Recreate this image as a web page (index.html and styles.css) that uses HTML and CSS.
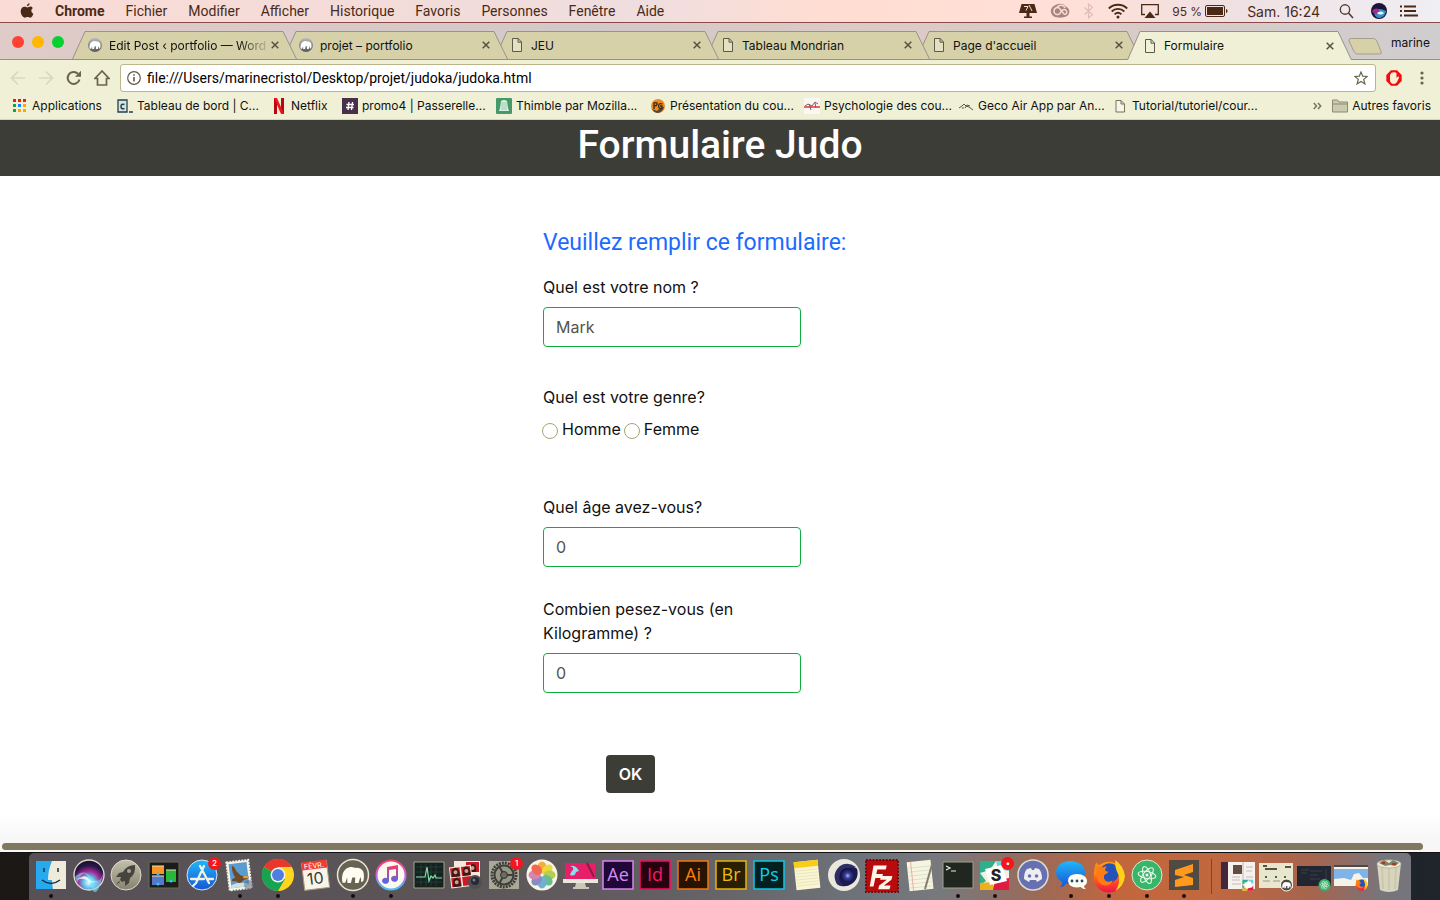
FILE: index.html
```html
<!DOCTYPE html>
<html lang="fr">
<head>
<meta charset="utf-8">
<title>Formulaire</title>
<link rel="stylesheet" href="styles.css">
</head>
<body>
<svg class="defs" aria-hidden="true">
  <defs>
    <symbol id="file" viewBox="0 0 10 14"><path d="M.5.5h5.700l3.300 3.500v9.500h-9zM6 .5v3.700h3.500" fill="#f2f1dc" fill-opacity=".5" stroke="#5c5a48"/></symbol>
    <symbol id="close" viewBox="0 0 8 8"><path d="M.7.7l6.600 6.600M7.300.7L.7 7.300" stroke="#55533f" stroke-width="1.500" fill="none"/></symbol>
    <symbol id="elephant" viewBox="2 2 20 20"><path d="M4.500 17.500c-1-5 .5-10 5-11 2.500-.6 3.500.6 5 .4 3.600-.2 5.500 2.400 5.300 6 0 2-.2 3.600-1.300 4-.8.2-1-.5-.6-1.500l-.7-1.900-1.200 4.300h-2.600l.2-4h-2.100l-1 4H8l-.2-4-1.300 3.700z"/></symbol>
    <symbol id="tabshape" viewBox="0 0 225 29" preserveAspectRatio="none"><path d="M.5 29L13 .5H211L224.500 29" stroke="#96918a"/></symbol>
    <symbol id="atom" viewBox="0 0 24 24"><g fill="none" stroke="#e8f7e8" stroke-width="1.100"><ellipse cx="12" cy="12" rx="9" ry="3.500" transform="rotate(10 12 12)"/><ellipse cx="12" cy="12" rx="9" ry="3.500" transform="rotate(70 12 12)"/><ellipse cx="12" cy="12" rx="9" ry="3.500" transform="rotate(130 12 12)"/></g><circle cx="12" cy="12" r="1.500" fill="#fff"/></symbol>
    <linearGradient id="grey" x2="0" y2="1"><stop stop-color="#b9b9b9"/><stop offset="1" stop-color="#595959"/></linearGradient>
    <linearGradient id="sky" x2="0" y2="1"><stop stop-color="#21b7f7"/><stop offset="1" stop-color="#1556d8"/></linearGradient>
    <linearGradient id="stone" x2="0" y2="1"><stop stop-color="#c3c1ae"/><stop offset="1" stop-color="#85836f"/></linearGradient>
    <linearGradient id="tunes" x2="0" y2="1"><stop stop-color="#fb3a68"/><stop offset=".5" stop-color="#c861e8"/><stop offset="1" stop-color="#46c4f8"/></linearGradient>
    <linearGradient id="note" x2="0" y2="1"><stop stop-color="#fb3a68"/><stop offset="1" stop-color="#4a6bf0"/></linearGradient>
    <linearGradient id="fox" x2="0" y2="1"><stop stop-color="#ff9a16"/><stop offset=".5" stop-color="#ff6a12"/><stop offset="1" stop-color="#f3104c"/></linearGradient>
    <radialGradient id="siri" cx=".5" cy=".75" r=".75"><stop stop-color="#eaffff"/><stop offset=".25" stop-color="#5cc6ee"/><stop offset=".5" stop-color="#a22a95"/><stop offset=".75" stop-color="#2a1749"/><stop offset="1" stop-color="#11102b"/></radialGradient>
    <radialGradient id="orb" cx=".55" cy=".55" r=".5"><stop stop-color="#aab4f0"/><stop offset=".4" stop-color="#3a3d9a"/><stop offset="1" stop-color="#10123c"/></radialGradient>
    <symbol id="firefox" viewBox="0 0 32 32"><circle cx="16" cy="17" r="14.500" fill="url(#fox)"/><path d="M2 15Q2 7 4 3q2 3 5 4l-3 9z" fill="#ff8a14"/><circle cx="16.500" cy="13" r="9" fill="#2452b8"/><path d="M4 8q3-2 6 0 1-1 4-1-2 2-1.500 4 2 1 3 1-1 2-4 3-1 4 2 6 3 1 6-1-2 5-7 5Q3 24 4 8z" fill="#ff7c14"/><path d="M22 1q8 6 9 15-1 10-9 14 5-7 3-15-4-7-3-14z" fill="#ffd21a"/></symbol>
    <symbol id="slack" viewBox="0 0 32 32"><rect x="1" y="2" width="29" height="29" fill="#f3f1e4"/><path d="M1 2h16l-6 9L1 14z" fill="#2eb08a"/><path d="M17 2h13v10l-11-2z" fill="#6dd0df"/><path d="M1 14l6 8-6 4z" fill="#2eb08a"/><path d="M1 24l11-1 6 8H1z" fill="#ecb120"/><path d="M16 22l14-3v12H14z" fill="#e01b40"/><path d="M6 10l17-4 5 16-17 4z" fill="#fff"/></symbol>
  </defs>
</svg>

<header class="menubar">
  <nav class="menus" aria-label="Menus">
    <svg class="apple" viewBox="0 0 14 16"><path d="M9.600.2c.1 1.600-1.200 3-2.700 3C6.700 1.700 8.200.3 9.600.2zM12.800 5.300c-2.200 1.400-1.700 4.500.6 5.400-.5 1.700-1.900 4-3.200 4-1 0-1.500-.6-2.700-.6s-1.700.6-2.600.6C3 14.700.7 11.600.7 8.300c0-2.900 1.800-4.600 3.800-4.600 1.200 0 2 .7 2.900.7.800 0 1.800-.8 3.200-.8.900 0 1.700.6 2.200 1.700z" fill="#4a2a16"/></svg>
    <button class="app">Chrome</button><button>Fichier</button><button>Modifier</button><button>Afficher</button><button>Historique</button><button>Favoris</button><button>Personnes</button><button>Fenêtre</button><button>Aide</button>
  </nav>
  <div class="status">
    <svg width="18" height="16" viewBox="0 0 18 16"><path d="M2.500 1h13L18 10H0zM7.500 10h3v3.500H13V15H5v-1.500h2.500z" fill="#4a2a16"/><path d="M5 3.500h4l-2 4M10 2l3 6" stroke="#f8dcd4" fill="none"/></svg>
    <svg width="20" height="16" viewBox="0 0 20 16"><path d="M6 1.700c4-2 8-1 10 2 4 1 4.500 7 1 9.300-3 2-9 2-12 1C-.5 12-1 4 6 1.700z" fill="#aa8580"/><g fill="none" stroke="#f8ded8" stroke-width="1.400"><path d="M10 10.500c-2 2-6 1-6-2.500s4.500-4.500 6-2l4 5c2 1 3.500-1 2.500-3s-3.500-2-5 0l-2 3M7 4c3-3 7-2 8 1"/></g></svg>
    <svg width="12" height="16" viewBox="0 0 12 16"><path d="M1.500 4.500l8 7-4 3.500V1l4 3.500-8 7" fill="none" stroke="#dfbdb8" stroke-width="1.200"/></svg>
    <svg width="20" height="16" viewBox="0 0 20 16"><g fill="none" stroke="#4a2a16" stroke-width="1.800"><path d="M.8 5.500c5-5 13.400-5 18.400 0M3.700 8.500c3.500-3.500 9.100-3.500 12.600 0M6.600 11.400c2-1.900 4.800-1.900 6.800 0"/></g><circle cx="10" cy="14" r="1.500" fill="#4a2a16"/></svg>
    <svg width="18" height="16" viewBox="0 0 18 16"><path d="M4 11.500H.7V1.700h16.600v9.800H14" fill="none" stroke="#4a2a16" stroke-width="1.300"/><path d="M9 8.500l5.500 6.500h-11z" fill="#4a2a16"/></svg>
    <span class="battery">95 %<svg width="23" height="12" viewBox="0 0 23 12"><rect x=".5" y=".5" width="19" height="11" rx="1.500" fill="none" stroke="#4a2a16"/><path d="M2 2h16v8H2zM21 4c2 .5 2 3.500 0 4z" fill="#4a2a16"/></svg></span>
    <span class="clock">Sam. 16:24</span>
    <svg class="search" width="15" height="16" viewBox="0 0 15 16"><circle cx="6" cy="6.500" r="4.700" fill="none" stroke="#5a4034" stroke-width="1.400"/><path d="M9.500 10l4.500 5" stroke="#5a4034" stroke-width="1.700"/></svg>
    <svg width="16" height="16" viewBox="0 0 16 16"><circle cx="8" cy="8" r="8" fill="#1b1538"/><path d="M3 8c3-3 8-2 12 0-1 5-4 7-7 7-3 0-5-3-5-7z" fill="#3b8fc8"/><path d="M1 8c3-4 7-3 8 1-3 3-5 3-8-1z" fill="#a22b95"/><path d="M6 10c3-2 5-2 7 0-2 2-5 2-7 0z" fill="#d8ffff"/></svg>
    <svg width="18" height="14" viewBox="0 0 18 14"><path d="M0 2.500h2M4 2.500h12M0 7h2M4 7h12M0 11.500h2M4 11.500h14" stroke="#4a2a16" stroke-width="2"/></svg>
  </div>
</header>

<div class="window">
  <div class="tabstrip">
    <div class="lights"><button class="red" aria-label="Fermer"></button><button class="yellow" aria-label="Réduire"></button><button class="green" aria-label="Agrandir"></button></div>
    <div class="tabs">
      <div class="tab"><svg class="shape"><use href="#tabshape"/></svg><svg class="fav" viewBox="0 0 24 24"><circle cx="12" cy="12" r="12" fill="url(#grey)"/><use href="#elephant" fill="#fff"/></svg><a href="#" class="fade">Edit Post ‹ portfolio — Word</a><button aria-label="Fermer l’onglet"><svg><use href="#close"/></svg></button></div>
      <div class="tab"><svg class="shape"><use href="#tabshape"/></svg><svg class="fav" viewBox="0 0 24 24"><circle cx="12" cy="12" r="12" fill="url(#grey)"/><use href="#elephant" fill="#fff"/></svg><a href="#">projet – portfolio</a><button aria-label="Fermer l’onglet"><svg><use href="#close"/></svg></button></div>
      <div class="tab"><svg class="shape"><use href="#tabshape"/></svg><svg class="fav"><use href="#file"/></svg><a href="#">JEU</a><button aria-label="Fermer l’onglet"><svg><use href="#close"/></svg></button></div>
      <div class="tab"><svg class="shape"><use href="#tabshape"/></svg><svg class="fav"><use href="#file"/></svg><a href="#">Tableau Mondrian</a><button aria-label="Fermer l’onglet"><svg><use href="#close"/></svg></button></div>
      <div class="tab"><svg class="shape"><use href="#tabshape"/></svg><svg class="fav"><use href="#file"/></svg><a href="#">Page d'accueil</a><button aria-label="Fermer l’onglet"><svg><use href="#close"/></svg></button></div>
      <div class="tab active"><svg class="shape"><use href="#tabshape"/></svg><svg class="fav"><use href="#file"/></svg><a href="#">Formulaire</a><button aria-label="Fermer l’onglet"><svg><use href="#close"/></svg></button></div>
    </div>
    <button class="newtab" aria-label="Nouvel onglet"><svg viewBox="0 0 34 17"><path d="M3 .5h22.500q2 0 3 2l4.500 11q1 2.500-1.500 2.500H9.500q-2.500 0-3.500-2.500L1 3Q.5.500 3 .5z" fill="#d6d1a9" stroke="#a39d8c"/></svg></button>
    <button class="user">marine</button>
  </div>

  <div class="toolbar">
    <button aria-label="Précédent"><svg viewBox="0 0 16 16"><path d="M15 8H2M8 1.500L1.500 8 8 14.500" fill="none" stroke="#d8d8bd" stroke-width="1.700"/></svg></button>
    <button aria-label="Suivant"><svg viewBox="0 0 16 16"><path d="M1 8h13M8 1.500L14.500 8 8 14.500" fill="none" stroke="#d8d8bd" stroke-width="1.700"/></svg></button>
    <button aria-label="Actualiser"><svg viewBox="0 0 16 16"><path d="M13.500 9.500A6 6 0 1 1 12 3.700" fill="none" stroke="#6a644c" stroke-width="2"/><path d="M15 .8v6H9z" fill="#6a644c"/></svg></button>
    <button aria-label="Accueil"><svg viewBox="0 0 16 16"><path d="M8 1L1 8.500h2.500V15h9V8.500H15z" fill="none" stroke="#6a644c" stroke-width="1.700"/></svg></button>
    <div class="omnibox">
      <svg width="14" height="14" viewBox="0 0 14 14"><circle cx="7" cy="7" r="6.300" fill="none" stroke="#5f5a48" stroke-width="1.200"/><path d="M7 6v4.500M7 3.200v1.600" stroke="#5f5a48" stroke-width="1.600"/></svg>
      <input type="text" aria-label="Adresse" value="file:///Users/marinecristol/Desktop/projet/judoka/judoka.html">
      <svg width="14" height="14" viewBox="0 0 14 14"><path d="M7 1l1.700 4.200 4.500.3-3.500 2.900 1.200 4.500L7 10.400l-3.900 2.500 1.200-4.500L.8 5.500l4.500-.3z" fill="none" stroke="#6a644c" stroke-width="1.200"/></svg>
    </div>
    <button aria-label="Bloqueur"><svg viewBox="0 0 16 16"><path d="M5 .3h6L15.700 5v6L11 15.700H5L.3 11V5z" fill="#f20d0d"/><path d="M5 3.500Q5.500 2 7 2.500q1-1.200 2 0 1.500-.2 1.500 1V8l1.200-1.300q1.600-.5 1.300 1l-2 4.300Q10 14 7.500 14 4 13.500 4 10V5z" fill="#f8eed8"/></svg></button>
    <button aria-label="Menu"><svg viewBox="0 0 16 16"><g fill="#6a644c"><circle cx="8" cy="3" r="1.600"/><circle cx="8" cy="8" r="1.600"/><circle cx="8" cy="13" r="1.600"/></g></svg></button>
  </div>

  <nav class="bookmarks" aria-label="Favoris">
    <a href="#" class="w-apps"><svg viewBox="0 0 16 16"><path d="M1 1h3v3H1zM6 1h3v3H6zM11 1h3v3h-3z" fill="#ee1b12"/><path d="M1 6h3v3H1zM1 11h3v3H1z" fill="#12a34b"/><path d="M6 6h3v3H6z" fill="#1b87f3"/><path d="M11 6h3v3h-3zM6 11h3v3H6zM11 11h3v3h-3z" fill="#f8a809"/></svg>Applications</a>
    <a href="#"><svg viewBox="0 0 16 16"><path d="M1 2h9v12H1z" fill="#d9e5dc" stroke="#1f4254" stroke-width="1.300"/><path d="M7.500 6.500q-3.500-1-3.500 2t3.500 2M12 14h4" fill="none" stroke="#1f4254" stroke-width="1.500"/></svg>Tableau de bord | C...</a>
    <a href="#" class="w-short"><svg viewBox="0 0 16 16"><path d="M3 0h3v16H3zM10 0h3v16h-3z" fill="#b50912"/><path d="M3 0h3l7 16h-3z" fill="#ef1320"/></svg>Netflix</a>
    <a href="#"><svg viewBox="0 0 16 16"><path d="M0 0h16v16H0z" fill="#48304a"/><path d="M7 4L6 12M10.500 4l-1 8M4.500 6.500H12M4 9.500h7.500" stroke="#fff" stroke-width="1.300"/></svg>promo4 | Passerelle...</a>
    <a href="#"><svg viewBox="0 0 16 16"><rect width="16" height="16" rx="1" fill="#47996a"/><path d="M5 3q3-2 6 0l1 7 1 3H3l1-3z" fill="#d9f0e0"/><path d="M6 4v6M8 4v6M10 4v6M5 11h6" stroke="#8fc8a4" stroke-width=".8"/></svg>Thimble par Mozilla...</a>
    <a href="#"><svg viewBox="0 0 16 16"><circle cx="8" cy="8" r="7" fill="#ef8a1c"/><path d="M2 11q2 4 6 4 5-1 6-6l-4 1-3 3z" fill="#4b4744"/><path d="M4 11V5q4-1 3 1.500Q6.500 8 4 8M12.500 6Q9 4.500 8.500 8q.5 3.500 3.500 2V8h-2" fill="none" stroke="#3a2a1b" stroke-width="1.300"/></svg>Présentation du cou...</a>
    <a href="#"><svg viewBox="0 0 16 16"><path d="M0 0h16v16H0z" fill="#fbf8f4"/><path d="M0 9h16" stroke="#ef3d43" stroke-width="1.600"/><path d="M1 8l3-2 4 2 3-4 3 2M5 6l2 6M11 5l1 5" fill="none" stroke="#6d6565"/></svg>Psychologie des cou...</a>
    <a href="#"><svg viewBox="0 0 16 16"><path d="M1 10l3-2 2-2 2 2 3 1 4 3M7 10l2-3 3 1M4 10h2" fill="none" stroke="#3c4a40" stroke-width=".9"/></svg>Geco Air App par An...</a>
    <a href="#"><svg viewBox="0 0 16 16"><path d="M4 2.500h5l3.500 3.500v8H4zM9 2.500V6h3.500" fill="#f7f5e8" stroke="#77735c"/></svg>Tutorial/tutoriel/cour...</a>
    <button class="more" aria-label="Plus de favoris"><svg width="9" height="8" viewBox="0 0 9 8"><path d="M.8 1L3.500 4 .8 7M5 1l2.700 3L5 7" fill="none" stroke="#77735c" stroke-width="1.500"/></svg></button>
    <a href="#" class="w-last"><svg viewBox="0 0 16 16"><path d="M.5 2h5l1.500 2h8.500v10H.5z" fill="#cbcbb0" stroke="#8d8a75"/><path d="M.5 6h15" stroke="#8d8a75"/></svg>Autres favoris</a>
  </nav>

  <div class="page">
    <h1>Formulaire Judo</h1>
    <form class="judo">
      <h2>Veuillez remplir ce formulaire:</h2>
      <div class="field gap-lg"><label for="nom">Quel est votre nom ?</label><input id="nom" type="text" value="Mark"></div>
      <fieldset class="field">
        <legend>Quel est votre genre?</legend>
        <div class="radios"><input type="radio" name="genre" id="homme"><label for="homme">Homme</label><input type="radio" name="genre" id="femme"><label for="femme">Femme</label></div>
      </fieldset>
      <div class="field gap-md"><label for="age">Quel âge avez-vous?</label><input id="age" type="text" value="0"></div>
      <div class="field"><label for="poids">Combien pesez-vous (en Kilogramme) ?</label><input id="poids" type="text" value="0"></div>
      <button type="button" class="ok">OK</button>
    </form>
    <div class="scrolltrack"><div class="thumb"></div></div>
  </div>
</div>

<footer class="desktop">
  <ul class="dock">
    <li class="run"><svg viewBox="0 0 32 32"><path d="M1 2h30v28H1z" fill="#27a9f0"/><path d="M17 2h14v28H18q-1-5-1-9h-4Q13 11 17 2z" fill="#eeebdc"/><path d="M9 9v4M23 9v4M7 21q9 7 18 0" fill="none" stroke="#183040" stroke-width="1.500"/></svg></li>
    <li><svg viewBox="0 0 32 32"><circle cx="16" cy="16" r="15" fill="url(#siri)" stroke="#e6dfd2" stroke-width="1.300"/><path d="M2 18q8-9 16 0t12-3-2 8-11 1-13 0z" fill="#7be4f5" opacity=".6"/><path d="M4 21q8-7 12-1t12-1q-8 7-13 3t-11-1z" fill="#fff" opacity=".8"/></svg></li>
    <li><svg viewBox="0 0 32 32"><circle cx="16" cy="16" r="15" fill="url(#stone)" stroke="#dddac7"/><path d="M25 6q-8 0-12 7l-4 1-3 4 5 0-1 3 2 2 3-1v5l4-3 1-5q6-4 5-13zM9 22l-3 4 4-3z" fill="#45443d"/><circle cx="19" cy="12" r="2" fill="#a5a392"/></svg></li>
    <li><svg viewBox="0 0 32 32"><path d="M1 3h30v26H1z" fill="#1a1d1a" stroke="#6f6a50"/><path d="M4 7h12v8H4z" fill="#fa9525"/><path d="M18 11h10v12H18z" fill="#28b63d"/><path d="M4 17h12v9H4z" fill="#5579c9"/><path d="M4 7h12M18 11h10M4 17h12" stroke="#e8e3b0"/><g fill="#49b7f2"><circle cx="10" cy="15" r="1.500"/><circle cx="23" cy="22" r="1.500"/><circle cx="10" cy="25" r="1.500"/></g></svg></li>
    <li><svg viewBox="0 0 32 32"><circle cx="16" cy="16" r="15" fill="url(#sky)" stroke="#d8e6ec"/><path d="M10 24l8-17M14 7l9 17M5 20h13M22 20h5M9 25l-2 2" stroke="#f2f2e2" stroke-width="2.300" stroke-linecap="round"/></svg><b>2</b></li>
    <li class="run"><svg viewBox="0 0 32 32"><g transform="rotate(-7 16 16)"><path d="M4 2h22v28H4z" fill="#f6f3e7" stroke="#f6f3e7" stroke-width="2" stroke-dasharray="2 1"/><path d="M6 4h18v24H6z" fill="#5a9bd2"/><path d="M9 6q2 0 4 6l4 5 7 1v2l-6 2-3 3-3-3-5-1 1-2 3-1q-3-6-2-12z" fill="#704a26"/><path d="M19 17l5 1v2h-5z" fill="#d9a23c"/><path d="M6 25q9-3 18 1v2H6z" fill="#cce1e8"/></g><circle cx="25" cy="26" r="5" fill="#606578" opacity=".5"/></svg></li>
    <li class="run"><svg viewBox="0 0 32 32"><circle cx="16" cy="16" r="16" fill="#ffd51d"/><path d="M16 16L2 8A16 16 0 0 1 30 8H16z" fill="#e9382b"/><path d="M2 8A16 16 0 0 0 16 32l7-12-7-4z" fill="#17a352"/><circle cx="16" cy="16" r="7.500" fill="#f4f1ec"/><circle cx="16" cy="16" r="6" fill="#4f7de0"/></svg></li>
    <li><svg viewBox="0 0 32 32"><g transform="rotate(-7 16 16)"><path d="M4 3h25v27H4z" fill="#f8f5e8" stroke="#a39e86"/><path d="M4 2h25v8H4z" fill="#f23a2e"/><text x="16" y="9" font-size="7" fill="#fff">FÉVR.</text><text x="16" y="25" font-size="16" fill="#393732">10</text></g></svg></li>
    <li class="run"><svg viewBox="0 0 32 32"><circle cx="16" cy="16" r="15.500" fill="#676354" stroke="#eae6d4" stroke-width="1.500"/><use href="#elephant" x="2" y="2" width="28" height="28" fill="#fffdf1"/></svg></li>
    <li class="run"><svg viewBox="0 0 32 32"><circle cx="16" cy="16" r="14.500" fill="#fcf9ee" stroke="url(#tunes)" stroke-width="2"/><path d="M12 8l11-2v14a3.500 3 0 1 1-2-3v-7l-7 1v11a3.500 3 0 1 1-2-3z" fill="url(#note)"/></svg></li>
    <li><svg viewBox="0 0 32 32"><path d="M1 3h30v26H1z" fill="#14211e" stroke="#a4a38c"/><path d="M3 8h26M3 13h26M3 18h26M3 23h26M8 5v22M13 5v22M18 5v22M23 5v22" stroke="#294b40" stroke-width=".6"/><path d="M3 18h9l2-10 2 14 2-5 2 2 2-3 1 3h6" fill="none" stroke="#83dcab" stroke-width="1.200"/></svg></li>
    <li><svg viewBox="0 0 32 32"><path d="M4 2h26v22H4z" fill="#f5eadb"/><path d="M16 3h13v10H16z" fill="#cc1928"/><path d="M19 13q0-8 4-8t3 8" fill="#3b1b18"/><circle cx="22.500" cy="9" r="2" fill="#d99e7c"/><g transform="rotate(-7 12 17)"><path d="M0 7h22v21H0z" fill="#f5eadb"/><path d="M1 8h9.500v9H1zM12 8h9v9h-9zM1 18h9.500v9H1zM12 18h9v9h-9z" fill="#cc1928"/><path d="M2 17q0-9 4-9t4 9M13 17q0-9 4-9t4 9M2 27q0-9 4-9t4 9" fill="#3b1b18"/><circle cx="6" cy="12.500" r="2" fill="#d99e7c"/><circle cx="17" cy="12.500" r="2" fill="#d99e7c"/><circle cx="6" cy="22.500" r="2" fill="#d99e7c"/></g><circle cx="25" cy="23" r="7" fill="#4f5050"/><circle cx="25" cy="22" r="4" fill="#252b35"/><circle cx="24" cy="21" r="1.500" fill="#856fa7"/></svg></li>
    <li><svg viewBox="0 0 32 32"><path d="M1 2h30v28H1z" fill="#aaa997"/><circle cx="16" cy="16" r="12" fill="none" stroke="#3e3f3b" stroke-width="3" stroke-dasharray="2 1"/><circle cx="16" cy="16" r="9.500" fill="#989786" stroke="#3e3f3b" stroke-width="2"/><path d="M16 16l10 0M16 16l-5-9M16 16l-5 9" stroke="#3e3f3b" stroke-width="2"/><circle cx="16" cy="16" r="3.500" fill="#6c6b60" stroke="#333"/></svg><b>1</b></li>
    <li><svg viewBox="0 0 32 32"><circle cx="16" cy="16" r="15.500" fill="#f8f4e6"/><g opacity=".85"><ellipse cx="16" cy="8.500" rx="4.500" ry="6" fill="#fa9e1f"/><ellipse cx="16" cy="8.500" rx="4.500" ry="6" fill="#eed51d" transform="rotate(45 16 16)"/><ellipse cx="16" cy="8.500" rx="4.500" ry="6" fill="#a6c83a" transform="rotate(90 16 16)"/><ellipse cx="16" cy="8.500" rx="4.500" ry="6" fill="#50b580" transform="rotate(135 16 16)"/><ellipse cx="16" cy="8.500" rx="4.500" ry="6" fill="#59a6cc" transform="rotate(180 16 16)"/><ellipse cx="16" cy="8.500" rx="4.500" ry="6" fill="#7579be" transform="rotate(225 16 16)"/><ellipse cx="16" cy="8.500" rx="4.500" ry="6" fill="#cb73ab" transform="rotate(270 16 16)"/><ellipse cx="16" cy="8.500" rx="4.500" ry="6" fill="#f05136" transform="rotate(315 16 16)"/></g></svg></li>
    <li><svg viewBox="0 0 32 32"><path d="M1 4h30v17H1z" fill="#e71e68"/><path d="M-1 20h35v4H-1z" fill="#ebe7dc"/><path d="M12 24h9l1 4h3v2H9v-2h2z" fill="#cbc8b9"/><path d="M6 16q5 2 6-3l3-1q-3-6-9-5 4 1 3 4-2 1-3 5z" fill="#8adeed"/><path d="M23 4l7 14" stroke="#8c1b43" stroke-width="2"/></svg></li>
    <li><svg viewBox="0 0 32 32"><path d="M1 2h30v28H1z" fill="#1f0737" stroke="#dc84ef" stroke-width="1.500"/><text class="adobe" x="16" y="22" fill="#d58cf0">Ae</text></svg></li>
    <li><svg viewBox="0 0 32 32"><path d="M1 2h30v28H1z" fill="#27020d" stroke="#f80a68" stroke-width="1.500"/><text class="adobe" x="16" y="22" fill="#fa1473">Id</text></svg></li>
    <li><svg viewBox="0 0 32 32"><path d="M1 2h30v28H1z" fill="#281200" stroke="#f17513" stroke-width="1.500"/><text class="adobe" x="16" y="22" fill="#fa7e17">Ai</text></svg></li>
    <li><svg viewBox="0 0 32 32"><path d="M1 2h30v28H1z" fill="#282000" stroke="#e7b30c" stroke-width="1.500"/><text class="adobe" x="16" y="22" fill="#efbc12">Br</text></svg></li>
    <li><svg viewBox="0 0 32 32"><path d="M1 2h30v28H1z" fill="#02201f" stroke="#0cc8e2" stroke-width="1.500"/><text class="adobe" x="16" y="22" fill="#12d0ec">Ps</text></svg></li>
    <li><svg viewBox="0 0 32 32"><g transform="rotate(-6 16 16)"><path d="M4 2h24v28H4z" fill="#fbf6d2"/><path d="M4 2h24v6H4z" fill="#f8cd17"/><path d="M5 11h22M5 14h22M5 17h22M5 20h22M5 23h22M5 26h22" stroke="#e6e0bc" stroke-width=".8"/></g></svg></li>
    <li><svg viewBox="0 0 32 32"><circle cx="16" cy="16" r="16" fill="#eae8dc"/><ellipse cx="17" cy="15" rx="13" ry="12" fill="#1b1b50" transform="rotate(-35 17 15)"/><path d="M9 25Q4 14 13 8q7-4 17 2-3-9-14-9Q2 3 1 16q1 12 11 15z" fill="#eae8dc"/><path d="M9 25Q3 15 12 7q7-5 16 1l-8 1q-8 2-9 9 0 6 5 9z" fill="#2d2e66"/><circle cx="19" cy="16" r="7" fill="url(#orb)"/></svg></li>
    <li><svg class="big" viewBox="0 0 36 36"><path d="M1 1h34v34H1z" fill="#b90b0d" stroke="#6f0707" stroke-width="2" stroke-dasharray="2 1.500"/><path d="M9 7h14l-1 4h-9l-1 5h7l-1 4h-7l-2 9H5zM17 18h12l-1 4-8 6h7l-1 4H14l1-4 8-6h-7z" fill="#fff6e8"/></svg></li>
    <li><svg viewBox="0 0 32 32"><g transform="rotate(-6 16 16)"><path d="M4 2h24v29H4z" fill="#f7f4df"/><path d="M5 8h22M5 12h22M5 16h22M5 20h22M5 24h22M5 28h22" stroke="#d5dccb" stroke-width=".8"/><path d="M8 2v29" stroke="#e89a8d" stroke-width=".7"/></g><path d="M29 2L21 30" stroke="#817e70" stroke-width="2"/></svg></li>
    <li class="run"><svg viewBox="0 0 32 32"><path d="M1 3h30v26H1z" fill="#202721" stroke="#a29f8c"/><path d="M4 7l4 2-4 2M9 12h5" fill="none" stroke="#edecdc" stroke-width="1.200"/></svg></li>
    <li class="run"><svg viewBox="0 0 32 32"><use href="#slack"/><text x="17" y="22" font-size="16" font-weight="800" fill="#252323">S</text></svg><b>•</b></li>
    <li><svg viewBox="0 0 32 32"><circle cx="16" cy="16" r="15" fill="#6770b1" stroke="#dddcd2" stroke-width="1.500"/><path d="M7 20q0-7 3-10l4-1 1 2h2l1-2 4 1q3 3 3 10l-5 3-1-2h-6l-1 2z" fill="#efedf0"/><circle cx="12.500" cy="17" r="1.800" fill="#6770b1"/><circle cx="19.500" cy="17" r="1.800" fill="#6770b1"/></svg></li>
    <li class="run"><svg viewBox="0 0 32 32"><path d="M15 2c9 0 15 5 15 11.500S24 25 15 25q-2 0-4-.5Q9 28 5 28q3-2 2-5-6-4-6-9.500C1 7 7 2 15 2z" fill="url(#sky)"/><path d="M22 15c6 0 10 3 10 7 0 2-1 4-3 5q0 2 2 3-4 0-5-2-12 2-13-6 0-7 9-7z" fill="#fffdf3"/><g fill="#284769"><circle cx="17" cy="22" r="1.400"/><circle cx="22" cy="22" r="1.400"/><circle cx="27" cy="22" r="1.400"/></g></svg></li>
    <li class="run"><svg class="big" viewBox="0 0 32 32"><use href="#firefox"/></svg></li>
    <li class="run"><svg viewBox="0 0 32 32"><circle cx="16" cy="16" r="15" fill="#39b56b" stroke="#dfe9d3"/><use href="#atom" x="4" y="4" width="24" height="24"/></svg></li>
    <li class="run"><svg viewBox="0 0 32 32"><path d="M1 1h30v30H1z" fill="#504a42"/><path d="M7 11l18-6v8l-9 3 9 3v7L7 28v-7l9-3-9-2z" fill="#ff9a1d"/></svg></li>
    <li class="sep"></li>
    <li><svg class="mini" viewBox="0 0 36 32"><path d="M1 3h7v27H1z" fill="#43283b"/><path d="M8 3h27v27H8z" fill="#f5f1ed"/><path d="M13 6h9v9h-9z" fill="#624c43"/><path d="M23 3v27M12 18h8M12 21h8M26 8h7M26 12h6M12 25h9M26 18h7" stroke="#c8b8b5"/><use href="#slack" x="22" y="20" width="12" height="12"/></svg></li>
    <li><svg class="mini" viewBox="0 0 36 32"><path d="M1 4h34v25H1z" fill="#e9e6ce"/><path d="M7 10h12M5 7h4M27 8h6" stroke="#595242" stroke-width="2"/><path d="M7 18h2M17 18h2M26 18h2" stroke="#3a6c41" stroke-width="2"/><path d="M5 22h7M15 22h7" stroke="#9c977c"/><circle cx="28.500" cy="26" r="6" fill="#4d493d" stroke="#fff"/><use href="#elephant" x="23" y="20.500" width="11" height="11" fill="#fff"/></svg></li>
    <li><svg class="mini" viewBox="0 0 36 32"><path d="M1 7h34v20H1z" fill="#212630"/><path d="M5 11h8M5 14h6M14 12h12M14 16h8M14 20h10M30 10v13" stroke="#38404c"/><circle cx="28.500" cy="26" r="6" fill="#39b56b"/><use href="#atom" x="23" y="20.500" width="11" height="11"/></svg></li>
    <li><svg class="mini" viewBox="0 0 36 32"><path d="M1 7h34v20H1z" fill="#f5f2ea"/><path d="M1 10h34v9h-5l-4-5-5 1-3 6-7-2-10 1z" fill="#7fb4e8"/><path d="M1 7h34" stroke="#4b4a48" stroke-width="2"/><use href="#firefox" x="22" y="19" width="13" height="13"/></svg></li>
    <li><svg class="big" viewBox="0 0 32 34"><path d="M4 4h24l-3 27q-9 4-18 0z" fill="#d8d5bd"/><path d="M9 8l1 22M16 8v23M23 8l-1 22" stroke="#cbc8ae" stroke-width="2"/><ellipse cx="16" cy="5" rx="12" ry="4" fill="#f0edd7" stroke="#bbb89f"/><path d="M6 4l5-3 5 3 4-3 6 3-4 3-5-1-5 1z" fill="#817f6c"/><path d="M9 4h3M19 5h4" stroke="#a93b24" stroke-width="2"/></svg></li>
  </ul>
</footer>
</body>
</html>
```

FILE: styles.css
```css
* { box-sizing: border-box; }
body {
  margin: 0;
  min-height: 100vh;
  display: flex;
  flex-direction: column;
  font-family: Inter, Roboto, sans-serif;
  color: #111;
  background: #fff;
}
button { font: inherit; color: inherit; background: none; border: 0; padding: 0; }
a { color: inherit; text-decoration: none; }
svg { display: block; flex: none; }
.defs { position: absolute; width: 0; height: 0; }

.menubar {
  height: 23px;
  display: flex;
  justify-content: space-between;
  align-items: center;
  padding: 0 22px 0 20px;
  border-bottom: 1px solid #8a4b46;
  background: linear-gradient(90deg, #fadbd5, #f2dcda 30%, #efdedf 45%, #ffddd2 57%, #ffe0d8 75%, #efe0e2 85%, #efeff4);
  color: #4a2a16;
  font-size: 14px;
}
.menus { display: flex; align-items: center; gap: 21px; font-family: Roboto, Inter, sans-serif; }
.apple { width: 14px; height: 16px; }
.app { font-weight: 700; }
.status { display: flex; align-items: center; gap: 13px; }
.battery { display: flex; align-items: center; gap: 3px; font-size: 12px; }
.clock { margin: 0 6px; }
.search { margin-right: 4px; }

.window { flex: 1; display: flex; flex-direction: column; }
.tabstrip {
  height: 37px;
  display: flex;
  align-items: flex-end;
  border-bottom: 1px solid #96918a;
  background: linear-gradient(90deg, #dfcbc7, #d3c8c9 40%, #dccac5 60%, #d6cbcb 85%, #d0cdcf);
}
.lights { flex: none; width: 73px; height: 36px; padding: 13px 0 0 12px; display: flex; gap: 8px; }
.lights button { width: 12px; height: 12px; border-radius: 50%; }
.red { background: #ff4033; }
.yellow { background: #ffb700; }
.green { background: #08cf32; }
.tabs { flex: 1; display: flex; }
.tab {
  position: relative;
  flex: 1;
  min-width: 0;
  height: 28px;
  display: flex;
  align-items: center;
  padding: 0 5px 0 14px;
  font-size: 12px;
}
.tab:nth-child(1) { z-index: 5; }
.tab:nth-child(2) { z-index: 4; }
.tab:nth-child(3) { z-index: 3; }
.tab:nth-child(4) { z-index: 2; }
.tab:nth-child(5) { z-index: 1; }
.tab.active { z-index: 6; height: 29px; margin-bottom: -1px; }
.shape { position: absolute; left: -1px; top: 0; width: calc(100% + 14px); height: 100%; z-index: -1; fill: #d6d1a9; }
.active .shape { fill: #eff0d5; }
.fav { width: 16px; height: 14px; }
.tab a { flex: 1; min-width: 0; margin-left: 6px; overflow: hidden; white-space: nowrap; }
.fade { -webkit-mask-image: linear-gradient(90deg, #000 80%, transparent); mask-image: linear-gradient(90deg, #000 80%, transparent); }
.tab button { flex: none; }
.tab button svg { width: 8px; height: 8px; }
.newtab { flex: none; margin: 0 9px 4px; }
.newtab svg { width: 34px; height: 17px; }
.user { flex: none; width: 49px; height: 36px; padding: 12px 0 8px; line-height: 16px; font-size: 12px; text-align: left; }

.toolbar {
  height: 36px;
  display: flex;
  align-items: center;
  gap: 12px;
  padding: 0 10px;
  background: #eff0d5;
}
.toolbar > button svg { width: 16px; height: 16px; }
.omnibox {
  flex: 1;
  height: 28px;
  margin: 0 -2px;
  display: flex;
  align-items: center;
  gap: 6px;
  padding: 0 7px 0 6px;
  border: 1px solid #bdb58b;
  border-radius: 3px;
  background: #fff;
}
.omnibox input { flex: 1; min-width: 0; padding: 0; border: 0; background: none; outline: 0; font: 14px Roboto, Inter, sans-serif; color: #000; }

.bookmarks {
  height: 24px;
  display: flex;
  align-items: center;
  padding: 0 9px 4px 12px;
  border-bottom: 1px solid #d5d5bd;
  background: #eff0d5;
  font-size: 12px;
}
.bookmarks a { flex: 0 1 154px; display: flex; align-items: center; gap: 4px; white-space: nowrap; }
.bookmarks a svg { width: 16px; height: 16px; }
.bookmarks .w-apps { flex-basis: 105px; }
.bookmarks .w-short { flex-basis: 71px; }
.bookmarks .w-last { flex: none; }
.more { margin: 0 10px 0 auto; }

.page { flex: 1; display: flex; flex-direction: column; background: linear-gradient(#fff 95%, #f3f3f3); }
h1, h2 { font-family: Roboto, Inter, sans-serif; }
h1 { margin: 0; height: 56px; background: #3d3d37; color: #fff; font-size: 39px; line-height: 50px; font-weight: 500; text-align: center; }
.judo {
  flex: 1;
  display: grid;
  grid-template-columns: minmax(0, 543fr) minmax(0, 258fr) minmax(0, 639fr);
  align-content: start;
  padding: 52px 0 50px;
  font-size: 16px;
  line-height: 24px;
}
.judo > * { grid-column: 2; }
.judo h2 { grid-column: 2 / -1; margin: 0 0 17px; font-size: 23px; line-height: 30px; font-weight: 400; color: #1b6bff; }
.field { display: flex; flex-direction: column; gap: 8px; min-width: 0; margin: 0; padding: 0; border: 0; }
.gap-lg { margin-bottom: 38px; }
.gap-md { margin-bottom: 30px; }
.field input[type="text"] {
  width: 100%;
  height: 40px;
  padding: 0 12px;
  border: 1px solid #12ad42;
  border-radius: 4px;
  background: #fff;
  color: #55534a;
  font: inherit;
}
legend { padding: 0; margin-bottom: 8px; }
fieldset.field { display: block; margin-bottom: 54px; }
.radios { display: flex; align-items: center; gap: 4px; }
.radios input { appearance: none; width: 16px; height: 16px; margin: 3px 0 0 -1px; border: 1px solid #aaa473; border-radius: 50%; background: #fff; }
.ok { justify-self: start; margin: 62px 0 0 63px; width: 49px; height: 38px; border-radius: 4px; background: #3d3d37; color: #fff; font-weight: 600; }
.scrolltrack { padding: 0 17px 2px 2px; background: #f8f6f6; }
.thumb { height: 7px; border-radius: 4px; background: #807860; }

.desktop { padding: 0 29px; border-top: 1px solid #111; background: linear-gradient(90deg, #1c1815, #15151a 50%, #20242b); }
.dock {
  display: flex;
  height: 47px;
  margin: 0;
  padding: 0 3px;
  list-style: none;
  border-radius: 5px 5px 0 0;
  background: linear-gradient(90deg, #565157, #5b5557 30%, #625e61 45%, #6d7379 60%, #77797d 66%, #9b6a58 73%, #c3663d 79%, #c0683f 86%, #a5644f 93%, #77757c 98%);
}
.dock li { position: relative; flex: 1; min-width: 0; display: flex; justify-content: center; align-items: flex-start; padding-top: 6px; }
.dock svg { width: 32px; height: 32px; overflow: visible; }
.dock .big { width: 34px; height: 34px; }
.dock .mini { width: 36px; }
.dock .sep { flex: 0 0 16px; }
.sep::before { content: ""; width: 1px; height: 35px; background: #7c4634; }
.run::after { content: ""; position: absolute; bottom: 2px; left: calc(50% - 2px); width: 4px; height: 4px; border-radius: 50%; background: #180d0d; }
.dock b { position: absolute; top: 4px; right: 0; width: 13px; height: 13px; border-radius: 50%; background: #f3161a; color: #fff; font-size: 8px; line-height: 13px; font-weight: 500; text-align: center; }
.dock text { text-anchor: middle; font-family: Inter, sans-serif; }
.dock .adobe { font: 500 18px "Open Sans", sans-serif; }
```
